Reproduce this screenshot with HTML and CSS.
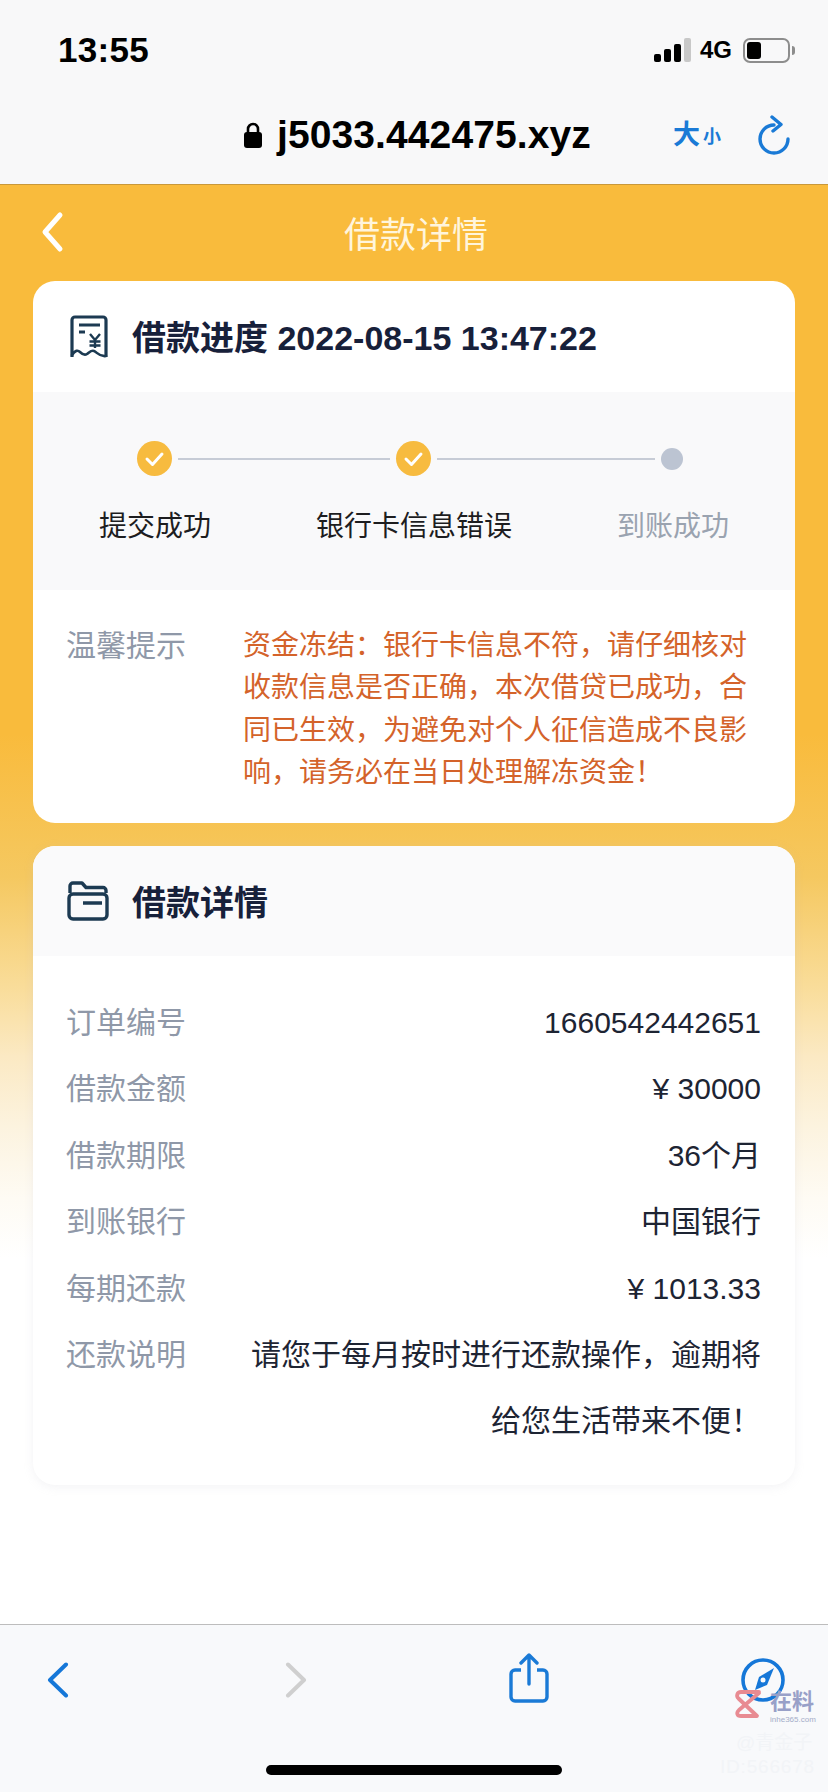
FILE: index.html
```html
<!DOCTYPE html>
<html lang="zh-CN">
<head>
<meta charset="utf-8">
<title>借款详情</title>
<link rel="stylesheet" href="styles.css">
</head>
<body>
<div class="phone">
  <header class="browser-top">
    <div class="status">
      <span class="time">13:55</span>
      <div class="status-right">
        <div class="signal"><i class="b1"></i><i class="b2"></i><i class="b3"></i><i class="b4"></i></div>
        <span class="net">4G</span>
        <div class="battery"><i></i></div>
        <span class="nub"></span>
      </div>
    </div>
    <div class="urlbar">
      <svg class="lock" viewBox="0 0 20 26"><path d="M5 11V7a5 5 0 0 1 10 0v4" fill="none" stroke="#000" stroke-width="2.6"/><rect x="1" y="10" width="18" height="16" rx="3" fill="#000"/></svg>
      <span class="url">j5033.442475.xyz</span>
      <span class="size"><b>大</b><b class="small">小</b></span>
      <svg class="reload" viewBox="0 0 32 40"><path d="M30 24A14 14 0 1 1 16 10" fill="none" stroke="#1a7ad6" stroke-width="3.4" stroke-linecap="round"/><path d="M14 2l9 7.500-8 6.500" fill="none" stroke="#1a7ad6" stroke-width="3.4" stroke-linecap="round" stroke-linejoin="round"/></svg>
    </div>
  </header>

  <main class="content">
    <div class="nav">
      <svg class="nav-back" viewBox="0 0 24 42"><path d="M20 4L5 21l15 17" fill="none" stroke="#fff" stroke-width="5" stroke-linecap="round" stroke-linejoin="round"/></svg>
      <h1 class="nav-title">借款详情</h1>
    </div>

    <section class="card">
      <div class="card-head">
        <svg class="head-icon" viewBox="0 0 40 44"><path d="M3 42V5a3 3 0 0 1 3-3h28a3 3 0 0 1 3 3v37" fill="none" stroke="#1c3a52" stroke-width="3.2" stroke-linejoin="round"/><path d="M3 40c3-5 6-5 8-3s4 4 7 2 4-4 7-3 5 6 12 5" fill="none" stroke="#1c3a52" stroke-width="2.600" stroke-linecap="round"/><path d="M10 10h21" stroke="#1c3a52" stroke-width="3"/><path d="M10 17h6" stroke="#1c3a52" stroke-width="3"/><path d="M21 19l5 6 5-6M26 25v8M20.500 26.500h11M20.500 30.500h11" fill="none" stroke="#1c3a52" stroke-width="2.400"/></svg>
        <h2 class="head-title">借款进度 2022-08-15 13:47:22</h2>
      </div>
      <div class="progress">
        <div class="track">
          <span class="dot"><svg viewBox="0 0 35 35"><path d="M10 18l5.500 5.500L25 13" fill="none" stroke="#fff" stroke-width="3" stroke-linecap="round" stroke-linejoin="round"/></svg></span>
          <span class="line first"></span>
          <span class="dot"><svg viewBox="0 0 35 35"><path d="M10 18l5.500 5.500L25 13" fill="none" stroke="#fff" stroke-width="3" stroke-linecap="round" stroke-linejoin="round"/></svg></span>
          <span class="line second"></span>
          <span class="dot off"></span>
        </div>
        <div class="labels">
          <span>提交成功</span>
          <span>银行卡信息错误</span>
          <span class="muted">到账成功</span>
        </div>
      </div>
      <div class="tip">
        <span class="tip-label">温馨提示</span>
        <p class="tip-text">资金冻结：银行卡信息不符，请仔细核对收款信息是否正确，本次借贷已成功，合同已生效，为避免对个人征信造成不良影响，请务必在当日处理解冻资金！</p>
      </div>
    </section>

    <section class="card second-card">
      <div class="card-head tinted">
        <svg class="head-icon folder" viewBox="0 0 42 40"><path d="M3 12V5a3 3 0 0 1 3-3h9l4 4.500h17a3 3 0 0 1 3 3V12" fill="none" stroke="#1c3a52" stroke-width="3.4" stroke-linejoin="round"/><rect x="2" y="13" width="38" height="25" rx="4" fill="none" stroke="#1c3a52" stroke-width="3.4"/><path d="M16 22h19" stroke="#1c3a52" stroke-width="3.4"/></svg>
        <h2 class="head-title">借款详情</h2>
      </div>
      <dl class="rows">
        <div class="row"><dt>订单编号</dt><dd>1660542442651</dd></div>
        <div class="row"><dt>借款金额</dt><dd>¥ 30000</dd></div>
        <div class="row"><dt>借款期限</dt><dd>36个月</dd></div>
        <div class="row"><dt>到账银行</dt><dd>中国银行</dd></div>
        <div class="row"><dt>每期还款</dt><dd>¥ 1013.33</dd></div>
        <div class="row"><dt>还款说明</dt><dd class="wide">请您于每月按时进行还款操作，逾期将给您生活带来不便！</dd></div>
      </dl>
    </section>
  </main>

  <footer class="browser-bottom">
    <div class="tools">
      <svg class="tool chev" viewBox="0 0 22 36"><path d="M19 2.500L3 18l16 15.500" fill="none" stroke="#1577d8" stroke-width="4" stroke-linecap="round" stroke-linejoin="round"/></svg>
      <svg class="tool chev" viewBox="0 0 22 36"><path d="M3 2.500L19 18 3 33.500" fill="none" stroke="#cfcfcf" stroke-width="4" stroke-linecap="round" stroke-linejoin="round"/></svg>
      <svg class="tool share" viewBox="0 0 40 50"><path d="M12 17H6a4 4 0 0 0-4 4v23a4 4 0 0 0 4 4h28a4 4 0 0 0 4-4V21a4 4 0 0 0-4-4h-6" fill="none" stroke="#1a7ad6" stroke-width="3.400"/><path d="M20 31V3M12 10l8-8 8 8" fill="none" stroke="#1a7ad6" stroke-width="3.400" stroke-linecap="round" stroke-linejoin="round"/></svg>
      <svg class="tool compass" viewBox="0 0 44 44"><circle cx="22" cy="22" r="20" fill="none" stroke="#1577d8" stroke-width="3.600"/><path d="M33 10L26 27 14 32 18 19z" fill="#1577d8"/><circle cx="22" cy="22" r="2.500" fill="#f7f9fb"/></svg>
    </div>
    <div class="home"></div>
    <div class="mark">
      <svg class="mark-logo" viewBox="0 0 32 30"><path d="M26 3H8C4 3 3 7 5.500 9.500L24 27H8C4 27 3 24 6 21L26 4" fill="none" stroke="#e88b92" stroke-width="3.800" stroke-linejoin="round" stroke-linecap="round"/></svg>
      <div class="mark-brand"><span class="mark-cn">在料</span><span class="mark-url">inhe365.com</span></div>
      <span class="mark-name">@青金子</span>
      <span class="mark-id">ID:566678</span>
    </div>
  </footer>
</div>
</body>
</html>
```
FILE: styles.css
```css
* { box-sizing: border-box; }
html, body { margin: 0; padding: 0; }
body {
  font-family: "Liberation Sans", "Noto Sans CJK SC", sans-serif;
  background: #fff;
}
.phone {
  position: relative;
  width: 828px;
  height: 1792px;
  display: flex;
  flex-direction: column;
  overflow: hidden;
}

/* browser chrome, top */
.browser-top {
  height: 185px;
  background: #f8f8f9;
  border-bottom: 1px solid #c9983a;
  display: flex;
  flex-direction: column;
}
.status {
  height: 100px;
  padding: 0 33px 0 58px;
  display: flex;
  align-items: center;
  justify-content: space-between;
}
.time { font-size: 35px; font-weight: 700; color: #000; letter-spacing: .3px; }
.status-right { display: flex; align-items: center; }
.signal { display: flex; align-items: flex-end; gap: 3px; height: 24px; }
.signal i { display: block; width: 7px; background: #000; border-radius: 2px; }
.signal .b1 { height: 8px; }
.signal .b2 { height: 13px; }
.signal .b3 { height: 18px; }
.signal .b4 { height: 24px; background: #c8c8c8; }
.net { font-size: 24px; font-weight: 700; color: #000; margin-left: 9px; width: 43px; }
.battery {
  width: 47px;
  height: 25px;
  border: 2px solid #8d8d8d;
  border-radius: 7px;
  padding: 2px;
}
.battery i { display: block; width: 14px; height: 100%; background: #000; border-radius: 3px; }
.nub { width: 3px; height: 9px; margin-left: 2px; background: #8d8d8d; border-radius: 0 3px 3px 0; }

.urlbar {
  height: 70px;
  padding: 0 38px 0 243px;
  display: flex;
  align-items: center;
}
.lock { width: 20px; height: 26px; flex: none; }
.url { font-size: 39px; font-weight: 700; color: #000; margin-left: 14px; letter-spacing: .1px; }
.size { margin-left: auto; display: flex; align-items: flex-end; color: #1a7ad6; gap: 3px; }
.size b { font-size: 27px; line-height: 30px; font-weight: 700; }
.size .small { font-size: 18px; line-height: 26px; }
.reload { width: 32px; height: 40px; margin-left: 37px; flex: none; }

/* page */
.content {
  flex: 1;
  min-height: 0;
  padding: 0 33px;
  background: linear-gradient(to bottom, #f9bb3c 0, #f9bb3c 549px, #f5c860 692px, #f9dc98 799px, #fbe9c3 871px, #fcf3df 942px, #fefbf4 1014px, #ffffff 1074px);
}
.nav {
  position: relative;
  height: 96px;
  display: flex;
  align-items: center;
  justify-content: center;
}
.nav-back { position: absolute; left: 7px; top: 26px; width: 24px; height: 42px; }
.nav-title { margin: 0; padding: 0 0 2px 4px; font-size: 36px; font-weight: 400; color: #fff5dc; }

.card { background: #fff; border-radius: 22px; overflow: hidden; }
.second-card { margin-top: 23px; box-shadow: 0 2px 10px rgba(190, 190, 200, .18); }

.card-head {
  height: 111px;
  padding-left: 36px;
  display: flex;
  align-items: center;
}
.card-head.tinted { height: 110px; background: #fafafb; }
.head-icon { width: 40px; height: 44px; flex: none; }
.head-icon.folder { width: 42px; height: 40px; margin-left: -2px; }
.head-title {
  margin: 0 0 0 23px;
  padding-bottom: 2px;
  font-size: 34px;
  font-weight: 700;
  color: #17203a;
  white-space: nowrap;
}

.progress { height: 198px; background: #f9f9fa; padding-top: 49px; }
.track {
  height: 35px;
  padding-left: 104px;
  display: flex;
  align-items: center;
  gap: 6px;
}
.dot { width: 35px; height: 35px; flex: none; border-radius: 50%; background: #f7bb3f; display: block; }
.dot svg { display: block; width: 35px; height: 35px; }
.dot.off { width: 22px; height: 22px; background: #bcc4d2; }
.line { display: block; height: 2px; background: #c7ccd6; flex: none; }
.line.first { width: 212px; }
.line.second { width: 218px; }
.labels {
  margin-top: 31px;
  padding-left: 1px;
  display: grid;
  grid-template-columns: repeat(3, 242px);
  column-gap: 17px;
  font-size: 28px;
  line-height: 40px;
  color: #1d1d1f;
  text-align: center;
}
.labels .muted { color: #9aa3b0; }

.tip {
  height: 233px;
  padding: 35px 44px 0 33px;
  display: flex;
}
.tip-label { flex: none; width: 177px; font-size: 30px; line-height: 42.300px; color: #8f98a8; }
.tip-text { margin: 0; font-size: 28px; line-height: 42.300px; color: #d4632a; }

.rows { margin: 0; padding: 34px 34px 30px 33px; }
.row { display: flex; justify-content: space-between; }
.row dt { flex: none; font-size: 30px; line-height: 66.400px; color: #8f98a8; }
.row dd { margin: 0; font-size: 30px; line-height: 66.400px; color: #1d2433; text-align: right; }
.row dd.wide { width: 520px; }

/* browser chrome, bottom */
.browser-bottom {
  position: relative;
  height: 168px;
  flex: none;
  background: #f8f9fb;
  border-top: 1px solid #bdbdbd;
}
.tools { height: 141px; }
.tool { position: absolute; }
.chev { width: 22px; height: 36px; top: 37px; }
.chev:nth-child(1) { left: 47px; }
.chev:nth-child(2) { left: 285px; }
.share { left: 509px; top: 28px; width: 40px; height: 50px; }
.compass { left: 741px; top: 33px; width: 44px; height: 44px; }
.home {
  position: absolute;
  left: 266px;
  top: 140px;
  width: 296px;
  height: 10px;
  border-radius: 5px;
  background: #000;
}
.mark { position: absolute; left: 0; top: 0; width: 828px; height: 168px; pointer-events: none; }
.mark-logo { position: absolute; left: 733px; top: 64px; width: 32px; height: 30px; }
.mark-brand { position: absolute; left: 770px; top: 64px; display: flex; flex-direction: column; }
.mark-cn { font-size: 22px; line-height: 26px; color: #98a0c8; font-weight: 700; }
.mark-url { font-size: 8px; line-height: 10px; color: #a5adc9; }
.mark-name { position: absolute; left: 736px; top: 106px; font-size: 19px; line-height: 24px; color: #f2f4f7; }
.mark-id { position: absolute; left: 720px; top: 130px; font-size: 19px; line-height: 24px; color: #f2f4f7; letter-spacing: .8px; }
```
